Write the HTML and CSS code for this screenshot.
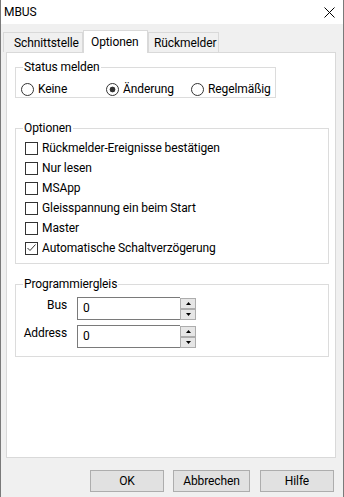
FILE: index.html
```html
<!DOCTYPE html>
<html lang="de">
<head>
<meta charset="utf-8">
<title>MBUS</title>
<link rel="stylesheet" href="styles.css">
</head>
<body>
<div class="window">
  <div class="titlebar">
    <span class="title">MBUS</span>
    <svg class="close" width="11" height="11" viewBox="0 0 11 11"><path d="M0.5 0.5 L10.5 10.5 M10.5 0.5 L0.5 10.5" stroke="#000" stroke-width="1" fill="none"/></svg>
  </div>
  <div class="tabs">
    <div class="tab t1">Schnittstelle</div>
    <div class="tab t2 active">Optionen</div>
    <div class="tab t3">Rückmelder</div>
  </div>
  <div class="panel">
    <fieldset class="group g-status">
      <legend>Status melden</legend>
      <div class="radios">
        <div class="radio r1"><span class="circle"></span>Keine</div>
        <div class="radio r2"><span class="circle on"></span>Änderung</div>
        <div class="radio r3"><span class="circle"></span>Regelmäßig</div>
      </div>
    </fieldset>
    <fieldset class="group g-opts">
      <legend>Optionen</legend>
      <div class="checks">
        <div class="check"><span class="box"></span>Rückmelder-Ereignisse bestätigen</div>
        <div class="check"><span class="box"></span>Nur lesen</div>
        <div class="check"><span class="box"></span>MSApp</div>
        <div class="check"><span class="box"></span>Gleisspannung ein beim Start</div>
        <div class="check"><span class="box"></span>Master</div>
        <div class="check"><span class="box"><svg width="11" height="11" viewBox="0 0 11 11"><polyline points="1.5,5 4,7.5 9.5,1.5" fill="none" stroke="#333" stroke-width="1"/></svg></span>Automatische Schaltverzögerung</div>
      </div>
    </fieldset>
    <fieldset class="group g-prog">
      <legend>Programmiergleis</legend>
      <div class="prow">
        <span class="plabel">Bus</span>
        <span class="field">0</span>
        <span class="spinner">
          <span class="sbtn"><svg width="5" height="3" viewBox="0 0 5 3"><path d="M2.5 0 L5 3 L0 3 Z" fill="#000"/></svg></span>
          <span class="sbtn"><svg width="5" height="3" viewBox="0 0 5 3"><path d="M0 0 L5 0 L2.5 3 Z" fill="#000"/></svg></span>
        </span>
      </div>
      <div class="prow">
        <span class="plabel">Address</span>
        <span class="field">0</span>
        <span class="spinner">
          <span class="sbtn"><svg width="5" height="3" viewBox="0 0 5 3"><path d="M2.5 0 L5 3 L0 3 Z" fill="#000"/></svg></span>
          <span class="sbtn"><svg width="5" height="3" viewBox="0 0 5 3"><path d="M0 0 L5 0 L2.5 3 Z" fill="#000"/></svg></span>
        </span>
      </div>
    </fieldset>
  </div>
  <div class="buttons">
    <button class="btn b-ok">OK</button>
    <button class="btn b-cancel">Abbrechen</button>
    <button class="btn b-help">Hilfe</button>
  </div>
</div>
</body>
</html>
```

FILE: styles.css
```css
html, body {
  margin: 0;
  padding: 0;
}
body {
  background: #f0f0f0;
  font-family: Roboto, "Noto Sans", sans-serif;
  font-size: 12px;
  letter-spacing: -0.1px;
  color: #000;
}
.window {
  width: 344px;
  height: 497px;
  box-sizing: border-box;
  border-left: 1px solid #7a7a7a;
  border-right: 1px solid #7a7a7a;
  display: flex;
  flex-direction: column;
  overflow: hidden;
}
.titlebar {
  height: 24px;
  flex: none;
  background: #fff;
  display: flex;
  align-items: center;
  justify-content: space-between;
  padding-left: 3px;
}
.title {
  line-height: 16px;
}
.close {
  display: block;
  margin-right: 8px;
}
.tabs {
  display: flex;
  align-items: flex-end;
  height: 22px;
  margin-top: 6px;
  padding-left: 2px;
  flex: none;
}
.tab {
  box-sizing: border-box;
  height: 20px;
  border: 1px solid #d9d9d9;
  border-bottom: none;
  background: #f0f0f0;
  display: flex;
  align-items: center;
  line-height: 16px;
  padding-top: 1px;
  white-space: nowrap;
}
.tab.active {
  height: 23px;
  margin-bottom: -1px;
  background: #fff;
  position: relative;
  z-index: 1;
  padding-top: 0;
}
.t1 { width: 80px; padding-left: 10px; }
.t2 { width: 65px; padding-left: 7px; }
.t3 { width: 71px; padding-left: 5px; }
.panel {
  box-sizing: border-box;
  margin-left: 5px;
  width: 330px;
  height: 406px;
  flex: none;
  background: #fff;
  border: 1px solid #d9d9d9;
  padding: 6px 0 0 8px;
}
.group {
  margin: 0;
  padding: 0;
  border: 1px solid #dcdcdc;
  box-sizing: border-box;
  min-width: 0;
}
.group legend {
  padding: 0 1px;
  margin-left: 7px;
  line-height: 16px;
}
.g-status { width: 261px; }
.g-opts { width: 314px; margin-top: 22px; }
.g-prog { width: 314px; margin-top: 12px; }
.radios {
  display: flex;
  align-items: center;
  height: 16px;
  margin-top: 6px;
  padding-left: 5px;
}
.radio {
  display: flex;
  align-items: center;
  gap: 4px;
  line-height: 16px;
}
.r1, .r2 { width: 85px; }
.circle {
  width: 13px;
  height: 13px;
  box-sizing: border-box;
  border: 1px solid #333;
  border-radius: 50%;
  background: #fff;
  flex: none;
}
.circle.on {
  background: radial-gradient(circle, #333 0, #333 2.6px, #fff 3.2px);
}
.checks {
  display: flex;
  flex-direction: column;
  padding: 2px 0 5px 9px;
}
.check {
  display: flex;
  align-items: center;
  height: 20px;
  gap: 4px;
  line-height: 16px;
}
.box {
  width: 13px;
  height: 13px;
  box-sizing: border-box;
  border: 1px solid #333;
  background: #fff;
  flex: none;
  display: flex;
  align-items: center;
  justify-content: center;
}
.box svg { display: block; }
.prow {
  display: flex;
  height: 23px;
  margin-top: 5px;
}
.prow:last-child {
  margin-bottom: 8px;
}
.plabel {
  width: 51px;
  text-align: right;
  line-height: 16px;
  margin-right: 10px;
}
.field {
  box-sizing: border-box;
  width: 103px;
  height: 23px;
  border: 1px solid #7a7a7a;
  border-right: none;
  padding-left: 5px;
  line-height: 21px;
  background: #fff;
}
.spinner {
  display: flex;
  flex-direction: column;
  width: 16px;
  padding-top: 1px;
}
.sbtn {
  box-sizing: border-box;
  height: 11px;
  border: 1px solid #adadad;
  background: #e6e6e6;
  display: flex;
  align-items: center;
  justify-content: center;
}
.sbtn svg { display: block; }
.buttons {
  display: flex;
  justify-content: flex-end;
  margin-top: 12px;
  padding-right: 9px;
}
.btn {
  box-sizing: border-box;
  height: 22px;
  border: 1px solid #adadad;
  background: #e1e1e1;
  font-family: Roboto, "Noto Sans", sans-serif;
  font-size: 12px;
  letter-spacing: -0.1px;
  color: #000;
  padding: 0;
  line-height: 18px;
}
.b-ok { width: 74px; }
.b-cancel { width: 77px; margin-left: 9px; }
.b-help { width: 74px; margin-left: 10px; }
```
